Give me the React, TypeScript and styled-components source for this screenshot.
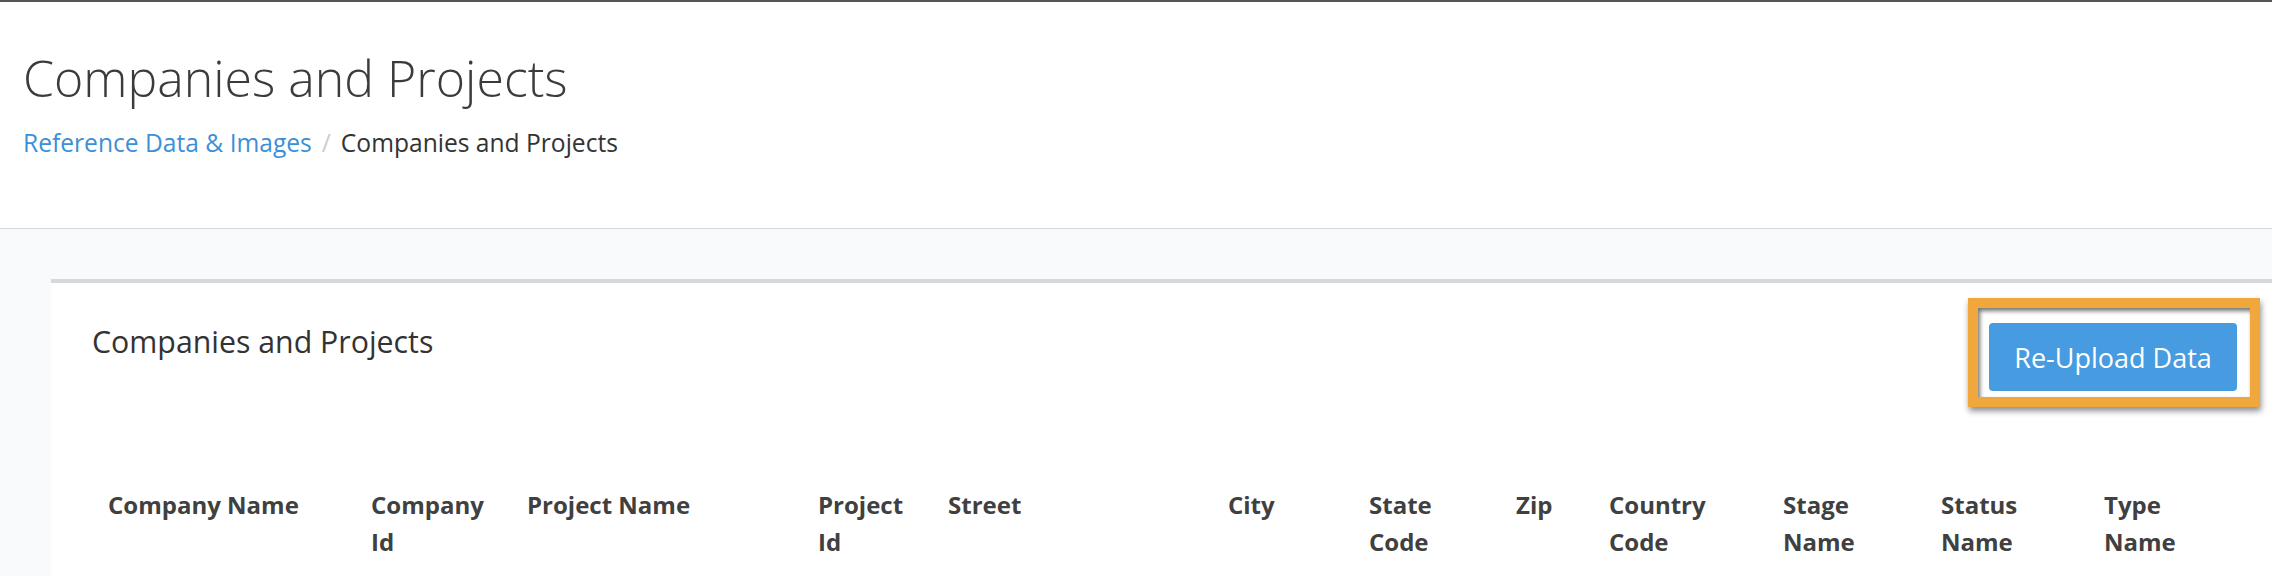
import * as React from "react";
import styled, { createGlobalStyle } from "styled-components";

const GlobalStyle = createGlobalStyle`
  html, body {
    margin: 0;
    padding: 0;
    background-color: #f9fafb;
    overflow: hidden;
  }
  body {
    font-family: "Open Sans", "Liberation Sans", sans-serif;
    color: #3d3d3d;
  }
`;

const PageHeader = styled.header`
  background-color: #ffffff;
  border-top: 2px solid #555555;
  border-bottom: 1px solid #d7dadd;
  height: 229px;
  padding: 0 23px;
  box-sizing: border-box;
  overflow: hidden;
`;

const Title = styled.h1`
  margin: 0;
  padding-top: 46px;
  font-size: 50px;
  font-weight: 300;
  line-height: 60px;
  color: #3b3b3b;
`;

const Breadcrumb = styled.nav`
  display: flex;
  align-items: baseline;
  margin-top: 19px;
  font-size: 24.6px;
  line-height: 32px;
`;

const CrumbLink = styled.a`
  color: #3d8fd8;
  text-decoration: none;
`;

const CrumbDivider = styled.span`
  color: #cccccc;
  padding: 0 10px;
`;

const CrumbCurrent = styled.span`
  color: #333333;
`;

const Content = styled.main`
  padding: 50px 0 0 51px;
`;

const Card = styled.section`
  width: 2227px;
  box-sizing: border-box;
  background-color: #ffffff;
  border-top: 4px solid #d5d9dd;
  padding: 40px 41px 16px;
`;

const CardHeader = styled.div`
  display: flex;
  align-items: flex-start;
  justify-content: space-between;
`;

const CardTitle = styled.h2`
  margin: 1px 0 0;
  font-size: 30.3px;
  font-weight: 400;
  line-height: 36px;
  color: #333333;
`;

const Highlight = styled.span`
  position: relative;
  display: inline-flex;

  &::after {
    content: "";
    position: absolute;
    top: -25px;
    right: -23px;
    bottom: -16px;
    left: -21px;
    border: 10px solid #f0a73c;
    box-shadow: 1px 4px 6px rgba(0, 0, 0, 0.45),
      inset 2px 3px 4px rgba(0, 0, 0, 0.55);
    pointer-events: none;
  }
`;

const UploadButton = styled.button`
  width: 248px;
  height: 68px;
  border: none;
  border-radius: 4px;
  background-color: #479be0;
  color: #ffffff;
  font-family: inherit;
  font-size: 27px;
  cursor: pointer;
`;

const Table = styled.table`
  margin-top: 95px;
  border-collapse: collapse;
  table-layout: fixed;
  width: 2145px;
`;

const HeadCell = styled.th<{ $width: number }>`
  width: ${(p) => p.$width}px;
  padding: 0 16px;
  text-align: left;
  vertical-align: top;
  font-size: 24px;
  font-weight: 700;
  line-height: 37px;
  color: #404040;
  box-sizing: border-box;
`;

const columns: [string, number][] = [
  ["Company Name", 263],
  ["Company Id", 156],
  ["Project Name", 291],
  ["Project Id", 130],
  ["Street", 280],
  ["City", 141],
  ["State Code", 147],
  ["Zip", 93],
  ["Country Code", 174],
  ["Stage Name", 158],
  ["Status Name", 163],
  ["Type Name", 149],
];

export default function App() {
  return (
    <>
      <GlobalStyle />
      <PageHeader>
        <Title>Companies and Projects</Title>
        <Breadcrumb>
          <CrumbLink href="#">Reference Data &amp; Images</CrumbLink>
          <CrumbDivider>/</CrumbDivider>
          <CrumbCurrent>Companies and Projects</CrumbCurrent>
        </Breadcrumb>
      </PageHeader>
      <Content>
        <Card>
          <CardHeader>
            <CardTitle>Companies and Projects</CardTitle>
            <Highlight>
              <UploadButton>Re-Upload Data</UploadButton>
            </Highlight>
          </CardHeader>
          <Table>
            <thead>
              <tr>
                {columns.map(([label, width]) => (
                  <HeadCell key={label} $width={width}>
                    {label}
                  </HeadCell>
                ))}
              </tr>
            </thead>
          </Table>
        </Card>
      </Content>
    </>
  );
}
